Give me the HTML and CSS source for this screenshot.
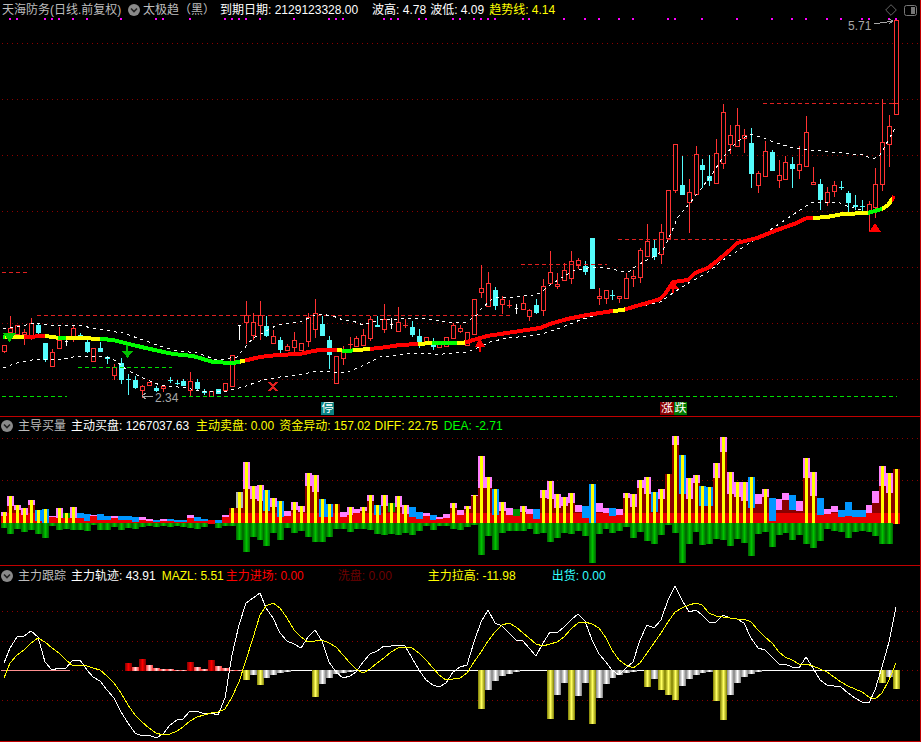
FILE: index.html
```html
<!DOCTYPE html>
<html lang="zh-CN">
<head>
  <meta charset="UTF-8">
  <title>天海防务</title>
  <link rel="stylesheet" href="styles.css">
</head>
<body>
  <div class="terminal">
    <!-- K线主图 -->
    <section class="pane pane-main">
      <div class="legend">
        <span class="name name-stock">天海防务(日线.前复权)</span>
        <svg class="chevron chevron-title" viewBox="0 0 12 12"><circle cx="6" cy="6" r="6"/><path d="M3 4.5 6 7.5 9 4.5"/></svg>
        <span class="name">太极趋（黑）</span>
        <span class="white gap-expire">到期日期: 2129123328.00</span>
        <span class="white gap-high">波高: 4.78</span>
        <span class="white gap-low">波低: 4.09</span>
        <span class="yellow gap-trend">趋势线: 4.14</span>
      </div>
      <div class="tools">
        <svg class="tool-diamond" viewBox="0 0 12 12"><path d="M6 .7 11.3 6 6 11.3 .7 6Z"/></svg>
        <svg class="tool-split" viewBox="0 0 13 11"><rect x=".5" y=".5" width="12" height="10" rx="2"/><rect class="filled" x="7" y="2" width="4" height="7"/></svg>
      </div>
      <svg id="chart-main" class="chart" viewBox="0 0 920 416"></svg>
      <span class="tag tag-stop">停</span>
      <span class="tag tag-rise">涨</span>
      <span class="tag tag-fall">跌</span>
    </section>

    <!-- 主导买量 -->
    <section class="pane pane-volume">
      <div class="legend">
        <svg class="chevron chevron-first" viewBox="0 0 12 12"><circle cx="6" cy="6" r="6"/><path d="M3 4.5 6 7.5 9 4.5"/></svg>
        <span class="name name-pane">主导买量</span>
        <span class="white">主动买盘: 1267037.63</span>
        <span class="yellow gap-sell">主动卖盘: 0.00</span>
        <span class="yellow gap-flow">资金异动: 157.02</span>
        <span class="yellow gap-diff">DIFF: 22.75</span>
        <span class="green">DEA: -2.71</span>
      </div>
      <svg id="chart-volume" class="chart" viewBox="0 417 920 148"></svg>
    </section>

    <!-- 主力跟踪 -->
    <section class="pane pane-track">
      <div class="legend">
        <svg class="chevron chevron-first" viewBox="0 0 12 12"><circle cx="6" cy="6" r="6"/><path d="M3 4.5 6 7.5 9 4.5"/></svg>
        <span class="name name-pane">主力跟踪</span>
        <span class="white">主力轨迹: 43.91</span>
        <span class="yellow">MAZL: 5.51</span>
        <span class="red gap-enter">主力进场: 0.00</span>
        <span class="dark-red gap-wash">洗盘: 0.00</span>
        <span class="yellow gap-lift">主力拉高: -11.98</span>
        <span class="cyan gap-out">出货: 0.00</span>
      </div>
      <svg id="chart-track" class="chart" viewBox="0 566 920 175"></svg>
    </section>
  </div>
  <script src="chart.js"></script>
</body>
</html>
```

FILE: styles.css
```css
/* 行情窗口 */
body {
  margin: 0;
  background-color: #000;
  font-family: "Liberation Sans", "Noto Sans CJK SC", sans-serif;
  font-size: 12px;
}

.terminal {
  width: 921px;
  height: 742px;
  box-sizing: border-box;
  border-right: 1px solid #c00000;
  display: flex;
  flex-direction: column;
  background-color: #000;
  overflow: hidden;
}

.pane {
  position: relative;
  box-sizing: border-box;
  border-bottom: 1px solid #c00000;
}

.pane-main {
  height: 417px;
}

.pane-volume {
  height: 149px;
}

.pane-track {
  height: 176px;
}

.chart {
  display: block;
  width: 920px;
  height: 100%;
  shape-rendering: crispEdges;
}

/* 指标说明文字 */
.legend {
  position: absolute;
  top: 0;
  left: 0;
  right: 0;
  z-index: 2;
  height: 18px;
  display: flex;
  align-items: center;
  gap: 6px;
  white-space: nowrap;
  line-height: 18px;
}

.pane-main .legend {
  padding-top: 1px;
  padding-left: 2px;
}

.pane-track .legend {
  padding-top: 1px;
}

.name {
  color: #bdbdbd;
}

.name-stock {
  width: 120px;
}

.name-pane {
  margin-right: -1px;
}

.white {
  color: #fff;
}

.yellow {
  color: #ff0;
}

.green {
  color: #0f0;
}

.red {
  color: #f00;
}

.dark-red {
  color: #6e0000;
}

.cyan {
  color: #3ff;
}

.gap-expire {
  margin-left: -1px;
}

.gap-high {
  margin-left: 8px;
}

.gap-low {
  margin-left: -2px;
}

.gap-trend {
  margin-left: -1px;
}

.gap-sell {
  margin-left: 1px;
}

.gap-flow {
  margin-left: -1px;
}

.gap-diff {
  margin-left: -2px;
}

.gap-enter {
  margin-left: -4px;
}

.gap-wash {
  margin-left: 28px;
}

.gap-lift {
  margin-left: 30px;
}

.gap-out {
  margin-left: 30px;
}

.chevron {
  flex: none;
  width: 12px;
  height: 12px;
}

.chevron circle {
  fill: #8a8a8a;
}

.chevron path {
  fill: none;
  stroke: #222;
  stroke-width: 1.6;
}

.chevron-title {
  margin-right: -3px;
}

.chevron-first {
  margin-left: 1px;
  margin-right: -1px;
}

/* 右上角工具按钮 */
.tools {
  position: absolute;
  top: 4px;
  right: 3px;
  z-index: 2;
  display: flex;
  align-items: center;
  gap: 7px;
}

.tool-diamond {
  width: 12px;
  height: 12px;
  fill: none;
  stroke: #666;
}

.tool-split {
  width: 13px;
  height: 11px;
  fill: none;
  stroke: #777;
}

.tool-split .filled {
  fill: #777;
  stroke: none;
}

/* 涨停跌停标记 */
.tag {
  position: absolute;
  top: 402px;
  height: 13px;
  line-height: 13px;
  text-align: center;
  color: #fff;
  overflow: hidden;
}

.tag-stop {
  left: 321px;
  width: 13px;
  background-color: #0a8282;
}

.tag-rise {
  left: 660px;
  width: 14px;
  background-color: #8a0000;
}

.tag-fall {
  left: 674px;
  width: 13px;
  background-color: #007a00;
}

.price-note {
  fill: #a8a8a8;
  font-size: 12px;
}
```

FILE: chart.js
```js
const CANDLE_RED = '#ff3232';
const CANDLE_CYAN = '#54fcfc';
const GRID_RED = '#8c0000';

function barX(i) {
  return Math.round(3.5 + 6.92 * i);
}

function pointsOf(list) {
  return list.map((p) => p[0] + ',' + p[1]).join(' ');
}

function dotted(y) {
  return `<line x1="2" x2="920" y1="${y + 0.5}" y2="${y + 0.5}" stroke="${GRID_RED}" stroke-dasharray="1 4"/>`;
}

function rect(x, y, w, h, fill) {
  return `<rect x="${x}" y="${y}" width="${w}" height="${h}" fill="${fill}"/>`;
}

function sideGradient(id, edge, center) {
  return `<linearGradient id="${id}"><stop offset="0" stop-color="${edge}"/>` +
    `<stop offset="0.5" stop-color="${center}"/><stop offset="1" stop-color="${edge}"/></linearGradient>`;
}

/* ---------- 主图 ---------- */
// 每根K线：类型 r阳 c阴 w十字，实体上沿、下沿，上影、下影
const candles = [
  ['r',345,352,345,353],['r',328,333,316,335],['r',325,335,325,335],['r',332,335,329,345],['r',323,339,318,340],
  ['c',325,333,323,335],['c',343,360,343,362],['r',352,367,349,367],['r',340,349,327,349],['w',341,342,338,346],
  ['r',328,337,325,342],['c',335,338,333,338],['c',342,352,338,353],['r',348,362,348,362],['c',348,352,342,352],
  ['c',357,359,356,364],['r',367,376,364,380],['c',363,380,358,384],['c',379,380,374,395],['c',380,388,376,389],
  ['r',386,391,385,398],['r',382,386,382,386],['c',388,391,386,392],['r',386,389,386,392],['c',380,381,377,383],
  ['c',383,384,380,385],['c',381,386,379,386],['r',381,391,372,397],['c',382,389,379,390],['c',391,393,389,395],
  ['r',391,397,391,397],['c',389,394,389,394],['r',383,391,383,391],['r',355,387,355,387],['w',325,326,325,340],
  ['r',315,323,301,344],['r',322,336,313,340],['r',315,326,301,340],['c',326,336,316,337],['r',336,344,330,344],
  ['c',340,350,337,353],['r',346,351,344,351],['r',340,348,332,353],['r',343,351,343,351],['r',317,342,313,347],
  ['r',313,330,299,338],['c',324,336,316,336],['c',340,355,336,369],['r',356,384,356,384],['r',352,359,346,365],
  ['r',344,345,337,350],['r',338,347,336,347],['r',335,346,329,346],['r',319,339,316,341],['c',325,327,316,327],
  ['r',319,330,304,333],['w',324,325,318,329],['r',322,332,307,332],['r',325,326,319,328],['c',327,335,321,337],
  ['c',336,342,329,348],['r',337,342,337,342],['c',343,347,338,350],['r',343,348,343,348],['r',337,347,337,347],
  ['r',325,339,323,339],['r',328,332,325,333],['r',332,346,332,346],['r',299,335,299,335],['r',288,293,265,298],
  ['r',283,307,272,307],['c',290,306,287,310],['r',299,305,296,314],['r',305,306,300,308],['w',308,309,304,314],
  ['r',303,310,296,310],['r',310,317,309,321],['c',305,313,299,314],['r',286,311,279,316],['r',272,284,251,284],
  ['r',284,287,273,289],['r',270,281,263,281],['r',261,279,251,284],['r',260,266,258,269],['c',266,272,261,275],
  ['c',238,289,238,289],['r',296,299,288,305],['r',290,299,290,304],['c',295,296,290,300],['r',296,299,296,303],
  ['r',278,299,273,299],['r',276,279,270,287],['r',250,278,248,283],['r',241,257,224,257],['c',248,257,239,260],
  ['r',232,255,224,264],['r',190,239,190,239],['r',144,191,144,193],['c',185,195,156,195],['r',192,203,179,233],
  ['r',154,195,146,195],['c',165,170,159,188],['c',176,181,155,186],['r',153,184,139,184],['r',112,164,104,169],
  ['r',135,145,125,154],['r',125,147,108,147],['r',135,139,129,153],['c',143,174,128,188],['r',173,186,171,193],
  ['r',151,177,141,177],['c',152,171,150,171],['r',175,181,160,188],['r',162,180,156,180],['c',164,169,157,188],
  ['r',164,171,146,179],['r',132,167,116,167],['r',182,185,167,185],['c',184,200,179,210],['r',192,203,187,206],
  ['r',185,192,181,197],['c',187,188,181,190],['c',193,203,191,213],['c',205,207,195,210],['c',206,207,200,212],
  ['r',204,212,201,232],['r',184,208,168,218],['r',142,185,99,191],['r',126,145,115,167],['r',20,115,20,115]
];

const upperBand = [[3,329],[37,323],[47,325],[77,325],[103,330],[123,333],[143,340],[157,345],[173,350],[197,353],[217,360],
  [237,357],[247,345],[253,338],[263,333],[277,325],[293,323],[300,322],[313,316],[320,314],[333,316],[343,320],[353,321],
  [363,325],[380,320],[400,319],[420,318],[433,320],[447,322],[467,322],[477,315],[480,310],[493,298],[513,297],[533,295],
  [540,293],[550,285],[563,277],[573,271],[593,267],[607,268],[620,271],[630,271],[632,269],[643,262],[653,257],[663,250],
  [668,240],[678,217],[690,203],[700,190],[713,173],[723,157],[737,142],[750,134],[760,137],[777,143],[793,148],[810,150],
  [843,153],[863,155],[873,159],[880,155],[893,132],[896,125]];

const lowerBand = [[3,368],[17,363],[37,359],[60,360],[77,356],[100,356],[113,359],[127,370],[143,378],[160,385],[187,388],
  [200,391],[223,392],[243,387],[263,380],[280,377],[303,374],[317,371],[330,372],[347,372],[358,368],[370,362],[380,357],
  [400,355],[413,353],[433,354],[443,354],[467,352],[477,348],[490,342],[507,338],[530,336],[545,333],[563,327],[580,320],
  [597,315],[620,311],[660,302],[673,293],[690,282],[707,273],[723,260],[742,248],[767,232],[785,220],[803,208],[813,202],
  [837,202],[850,207],[873,213]];

const trendLine = [[3,337],[17,337],[25,337],[45,336],[60,338],[80,338],[102,339],[113,340],[133,345],[150,349],[173,354],
  [193,356],[213,362],[233,363],[243,361],[260,357],[277,355],[300,354],[313,351],[320,350],[337,350],[347,351],[368,349],
  [380,348],[400,345],[418,344],[432,343],[463,343],[470,341],[487,336],[507,333],[533,329],[540,328],[550,324],[567,319],
  [587,315],[613,311],[623,310],[633,307],[647,303],[660,299],[665,294],[673,282],[688,280],[695,273],[708,268],[717,261],
  [730,250],[737,243],[757,238],[777,230],[797,223],[807,218],[813,218],[827,217],[843,214],[868,213],[882,209],[888,205],
  [893,198],[894,196]];

// 趋势线颜色分段：结束位置 x、颜色
const trendColors = [[5,'#0f0'],[24,'#ff0'],[45,'#f00'],[58,'#ff0'],[66,'#0f0'],[100,'#ff0'],[240,'#0f0'],[245,'#ff0'],
  [337,'#f00'],[342,'#ff0'],[353,'#0f0'],[370,'#ff0'],[418,'#f00'],[432,'#ff0'],[457,'#0f0'],[465,'#ff0'],[613,'#f00'],
  [625,'#ff0'],[813,'#f00'],[868,'#ff0'],[882,'#0f0'],[892,'#ff0'],[920,'#f00']];

const levels = [
  [272,2,28,'#e02020'],[315,37,510,'#e02020'],[264,521,607,'#e02020'],[239,618,745,'#e02020'],[103,763,897,'#e02020'],
  [396,2,67,'#00e000'],[367,78,172,'#00e000'],[396,182,897,'#00e000']
];

const pinkDots = [1,2,6,7,8,10,12,17,22,23,27,32,33,34,35,37,42,47,48,49,55,56,57,60,61,65,66,68,69,70,71,75,76,
  81,84,86,89,91,96,97,101,106,111,114,116,119,121,124,125,128,129];

function drawCandle(c, i) {
  const [type, top, bottom, high, low] = c;
  const x = barX(i);
  const color = type === 'r' ? CANDLE_RED : type === 'c' ? CANDLE_CYAN : '#fff';
  let out = '';
  if (high < top) out += rect(x, high, 1, top - high, color);
  if (low > bottom) out += rect(x, bottom, 1, low - bottom, color);
  if (type === 'r' && bottom - top > 2) {
    out += `<rect x="${x - 1.5}" y="${top + 0.5}" width="4" height="${bottom - top - 1}" fill="#000" stroke="${color}"/>`;
  } else if (type === 'w') {
    out += rect(x - 1, top, 3, 1, color);
  } else {
    out += rect(x - 2, top, 5, bottom - top, color);
  }
  return out;
}

function drawMain() {
  const stops = [];
  let from = 0;
  trendColors.forEach(([end, color]) => {
    stops.push(`<stop offset="${from / 920}" stop-color="${color}"/><stop offset="${end / 920}" stop-color="${color}"/>`);
    from = end;
  });

  let html = `<defs><linearGradient id="trend" gradientUnits="userSpaceOnUse" x1="0" x2="920" y1="0" y2="0">${stops.join('')}</linearGradient></defs>`;
  html += [43, 99, 155, 211, 267, 323, 379].map(dotted).join('');
  pinkDots.forEach((i) => { html += rect(barX(i) - 1, 18, 2, 2, '#ff00ff'); });
  html += candles.map(drawCandle).join('');
  html += rect(893, 103, 6, 1, CANDLE_RED);

  levels.forEach(([y, x1, x2, color]) => {
    html += `<line x1="${x1}" x2="${x2}" y1="${y + 0.5}" y2="${y + 0.5}" stroke="${color}" stroke-dasharray="4 3"/>`;
  });
  html += `<polyline points="${pointsOf(upperBand)}" fill="none" stroke="#fff" stroke-dasharray="3 4"/>`;
  html += `<polyline points="${pointsOf(lowerBand)}" fill="none" stroke="#fff" stroke-dasharray="3 4"/>`;
  html += `<polyline points="${pointsOf(trendLine)}" fill="none" stroke="url(#trend)" stroke-width="4"/>`;

  // 买卖箭头
  html += '<path d="M3 333H16L9.5 342Z" fill="#00d000"/>';
  html += rect(126, 345, 2, 7, '#00c000') + '<path d="M122 351H133L127.5 358Z" fill="#00c000"/>';
  html += '<path d="M480 338 485 347H475Z" fill="#f00"/>' + rect(479, 347, 2, 5, '#f00');
  html += '<path d="M673 281 679 289H667Z" fill="#f00"/>' + rect(672, 289, 2, 4, '#f00');
  html += '<path d="M875 223 881 232H869Z" fill="#f00"/>';
  html += '<path d="M269 382 277 391M277 382 269 391" stroke="#e02020" stroke-width="2" fill="none"/>';

  // 最高最低价标注
  html += '<path d="M153 396H142M146 393 142 396 146 399" stroke="#a8a8a8" fill="none"/>';
  html += '<text class="price-note" x="155" y="402">2.34</text>';
  html += '<path d="M874 24 893 21M889 19 893 21 889 24" stroke="#a8a8a8" fill="none"/>';
  html += '<text class="price-note" x="848" y="30">5.71</text>';
  document.getElementById('chart-main').innerHTML = html;
}

/* ---------- 主导买量 ---------- */
// 按 3 倍放大量取：顶部、红柱顶、绿柱底，基线为 327
// 类型 p粉 b蓝 g绿 d暗红 w灰，大写表示中间带黄线
const volume = [
  [291,303,338,'P'],[243,272,357,'P'],[270,285,342,'P'],[279,300,350,'P'],[255,270,345,'P'],[285,318,357,'B'],[282,325,369,'B'],
  [303,306,333,'p'],[279,309,345,'P'],[294,309,342,'G'],[276,309,345,'P'],[294,310,345,'b'],[297,318,348,'b'],[300,303,330,'p'],
  [297,315,345,'b'],[303,315,345,'b'],[303,309,336,'p'],[303,315,345,'b'],[303,315,339,'b'],[306,321,342,'b'],[306,315,336,'p'],
  [312,318,333,'p'],[315,321,336,'b'],[312,318,333,'p'],[312,318,336,'b'],[315,321,333,'b'],[315,321,336,'b'],[300,309,339,'p'],
  [306,318,342,'b'],[312,318,336,'b'],[315,315,327,'d'],[315,324,339,'b'],[300,306,333,'p'],[279,279,333,'D'],[231,279,375,'W'],
  [141,222,411,'P'],[213,252,366,'P'],[210,258,375,'P'],[225,288,393,'B'],[249,276,354,'P'],[258,306,375,'B'],[288,303,339,'p'],
  [261,285,354,'P'],[273,291,348,'P'],[174,213,366,'P'],[180,231,381,'P'],[252,306,381,'B'],[267,306,366,'B'],[267,267,342,'D'],
  [291,306,342,'p'],[276,300,351,'P'],[282,294,342,'p'],[276,288,342,'P'],[240,258,345,'P'],[270,300,357,'B'],[240,273,360,'P'],
  [264,291,357,'G'],[243,276,360,'P'],[270,297,354,'P'],[276,306,360,'b'],[291,312,348,'b'],[294,303,333,'p'],[300,315,345,'b'],
  [306,312,333,'p'],[297,309,333,'p'],[264,279,342,'P'],[285,300,345,'p'],[273,282,336,'P'],[240,243,330,'P'],[123,219,420,'P'],
  [186,219,363,'P'],[222,300,405,'B'],[261,288,354,'P'],[279,300,348,'p'],[282,303,348,'g'],[273,291,348,'P'],[282,297,342,'p'],
  [282,312,357,'b'],[225,249,354,'P'],[198,252,381,'P'],[237,279,369,'P'],[246,273,354,'P'],[234,264,357,'P'],[270,291,348,'p'],
  [273,309,363,'b'],[207,327,444,'B'],[264,291,357,'p'],[279,294,342,'p'],[279,303,354,'b'],[282,300,348,'p'],[234,249,336,'P'],
  [237,276,369,'P'],[195,219,351,'P'],[186,237,378,'P'],[231,291,387,'B'],[222,252,360,'P'],[177,177,330,'D'],[63,90,354,'P'],
  [120,237,444,'B'],[189,252,387,'P'],[180,204,351,'P'],[213,273,390,'B'],[216,273,387,'B'],[144,189,372,'P'],[66,111,375,'P'],
  [171,237,393,'P'],[201,246,372,'P'],[201,258,384,'P'],[186,279,423,'B'],[237,267,357,'p'],[222,246,351,'P'],[249,318,396,'b'],
  [252,285,360,'p'],[234,255,354,'p'],[240,285,375,'b'],[258,288,360,'p'],[129,189,387,'P'],[171,243,399,'P'],[249,300,378,'b'],
  [282,297,342,'p'],[273,291,348,'p'],[285,306,351,'b'],[261,303,369,'b'],[285,306,351,'b'],[285,306,348,'b'],[270,294,351,'p'],
  [228,264,363,'p'],[153,213,387,'P'],[174,234,387,'P'],[162,162,327,'D']
];

const TOP_COLORS = { p: '#ff80ff', b: '#0096ff', g: '#009000', d: '#8a0000', w: '#b8b8b8' };
const VOLUME_BASE = 524;

function drawVolume() {
  let html = `<defs>${sideGradient('bar-green', '#006000', '#00c400')}</defs>`;
  html += dotted(438) + dotted(480);

  volume.forEach(([top, mid, low, kind], i) => {
    const x = barX(i) - 3;
    const topY = VOLUME_BASE - Math.round((327 - top) / 3);
    const midY = VOLUME_BASE - Math.round((327 - mid) / 3);
    const lowY = VOLUME_BASE + Math.round((low - 327) / 3);
    const key = kind.toLowerCase();
    const brightY = Math.max(midY, VOLUME_BASE - 11);

    if (midY > topY) html += rect(x, topY, 7, midY - topY, TOP_COLORS[key]);
    if (brightY > midY) html += rect(x, midY, 7, brightY - midY, '#8a0000');
    if (VOLUME_BASE > brightY) html += rect(x, brightY, 7, VOLUME_BASE - brightY, '#e80000');
    if (kind !== key) html += rect(x + 2, topY, 3, VOLUME_BASE - topY, '#ff0');
    if (lowY > VOLUME_BASE) html += rect(x, VOLUME_BASE - 1, 7, lowY - VOLUME_BASE + 1, 'url(#bar-green)');
  });
  document.getElementById('chart-volume').innerHTML = html;
}

/* ---------- 主力跟踪 ---------- */
const whiteLine = [293,250,217,213,199,217,292,316,310,309,286,286,316,335,347,375,398,440,475,503,514,511,520,507,480,466,462,437,437,447,
  443,449,400,270,180,115,98,83,130,160,205,228,237,248,216,196,228,290,320,338,333,322,290,268,258,244,244,239,243,278,315,345,360,365,355,320,
  305,301,230,170,135,173,183,205,225,228,250,274,235,200,203,185,165,148,168,225,268,290,315,330,310,290,225,180,190,165,105,62,105,142,135,
  150,172,172,150,160,163,175,220,250,255,275,298,298,307,310,277,310,345,360,364,367,385,400,410,415,375,305,230,125];

const yellowLine = [338,295,270,255,235,218,232,250,265,285,303,300,302,308,315,333,355,385,420,450,470,490,505,510,506,497,485,468,457,450,
  443,440,432,395,350,285,220,150,122,115,130,160,195,215,230,227,225,235,245,270,295,312,325,313,295,278,260,250,246,248,265,285,310,330,345,342,
  340,325,290,260,228,200,180,175,185,203,220,238,242,237,230,215,192,175,172,178,190,220,255,285,300,308,295,265,235,205,170,140,130,120,115,
  120,145,153,157,160,162,163,172,195,215,235,262,275,285,297,298,303,312,322,335,350,362,372,382,395,402,385,345,295];

// 主力跟踪柱：序号 -> 颜色与底/顶（3 倍量取，零轴 316）
const redBars = { 18:['r',291],19:['l',303],20:['r',279],21:['l',297],22:['l',306],23:['l',311],24:['l',311],25:['l',314],26:['l',314],
  27:['r',288],28:['l',303],29:['l',309],30:['r',282],31:['l',300],32:['l',306],33:['l',312],34:['l',314] };
const downBars = { 35:['y',345],36:['w',331],37:['y',360],38:['w',339],39:['w',331],40:['w',325],41:['w',321],42:['w',319],43:['w',318],
  44:['w',317],45:['y',396],46:['w',357],47:['w',339],48:['w',327],49:['w',325],50:['w',322],51:['w',320],52:['w',318],
  69:['y',432],70:['w',375],71:['w',348],72:['w',333],73:['w',327],74:['w',322],75:['w',320],76:['w',319],77:['w',318],78:['w',317],
  79:['y',462],80:['w',390],81:['w',354],82:['y',465],83:['w',393],84:['w',354],85:['y',477],86:['w',399],87:['w',357],88:['w',339],
  89:['w',330],90:['w',325],91:['w',322],92:['w',320],93:['y',366],94:['w',342],95:['y',375],96:['y',390],97:['y',405],98:['w',363],
  99:['w',342],100:['w',330],101:['w',324],102:['w',321],103:['y',408],104:['y',465],105:['w',390],106:['w',354],107:['w',336],
  108:['w',327],109:['w',322],110:['w',319],111:['w',318],127:['y',354],128:['w',336],129:['y',372] };

function drawTrack() {
  const ZERO = 670;
  let html = '<defs>' + sideGradient('bar-r', '#800000', '#ff0000') + sideGradient('bar-l', '#ff3030', '#ffd8d8') +
    sideGradient('bar-y', '#7f7f00', '#ffff60') + sideGradient('bar-w', '#808080', '#ffffff') + '</defs>';
  html += dotted(611) + dotted(641) + dotted(ZERO) + dotted(700);

  for (let i = 0; i < 130; i++) {
    const x = barX(i) - 3;
    if (redBars[i]) {
      const h = Math.max(1, Math.round((316 - redBars[i][1]) / 3));
      html += rect(x, ZERO + 1 - h, 7, h, `url(#bar-${redBars[i][0]})`);
    } else if (i < 10) {
      html += rect(x, ZERO, 7, 1, '#ff9090');
    } else if (i >= 35) {
      const bar = downBars[i] || ['w', 319];
      const h = Math.max(1, Math.round((bar[1] - 316) / 3));
      html += rect(x, ZERO, 7, h, h > 1 ? `url(#bar-${bar[0]})` : '#fff');
    }
  }

  const toPoints = (list) => list.map((v, i) => [barX(i), Math.round(566 + (v - 3) / 3)]);
  html += `<polyline points="${pointsOf(toPoints(whiteLine))}" fill="none" stroke="#fff"/>`;
  html += `<polyline points="${pointsOf(toPoints(yellowLine))}" fill="none" stroke="#ff0"/>`;
  document.getElementById('chart-track').innerHTML = html;
}

drawMain();
drawVolume();
drawTrack();
```
